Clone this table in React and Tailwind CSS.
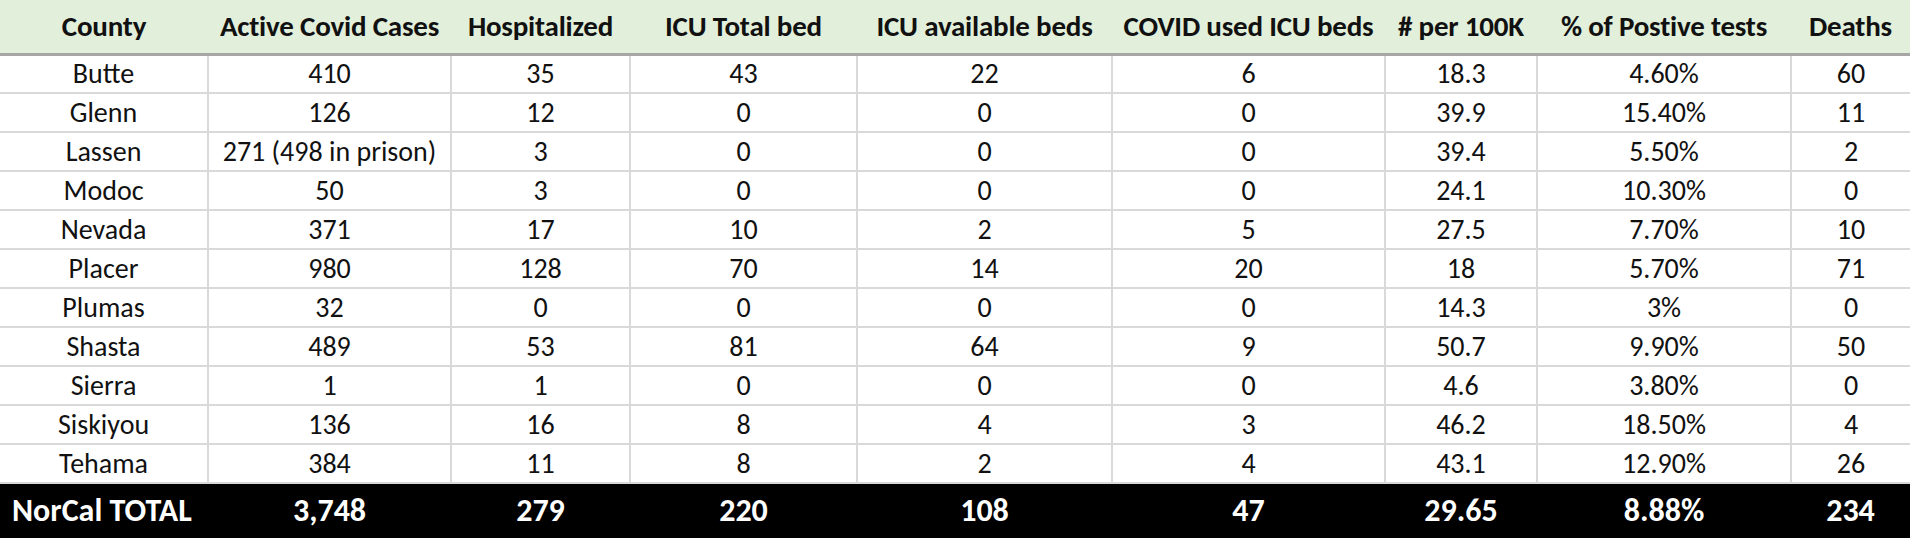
const columns = [
  { label: 'County', width: 'w-[208px]' },
  { label: 'Active Covid Cases', width: 'w-[243px]' },
  { label: 'Hospitalized', width: 'w-[179px]' },
  { label: 'ICU Total bed', width: 'w-[227px]' },
  { label: 'ICU available beds', width: 'w-[255px]' },
  { label: 'COVID used ICU beds', width: 'w-[273px]' },
  { label: '# per 100K', width: 'w-[152px]' },
  { label: '% of Postive tests', width: 'w-[254px]' },
  { label: 'Deaths', width: 'w-[119px]' },
]

const rows = [
  ['Butte', '410', '35', '43', '22', '6', '18.3', '4.60%', '60'],
  ['Glenn', '126', '12', '0', '0', '0', '39.9', '15.40%', '11'],
  ['Lassen', '271 (498 in prison)', '3', '0', '0', '0', '39.4', '5.50%', '2'],
  ['Modoc', '50', '3', '0', '0', '0', '24.1', '10.30%', '0'],
  ['Nevada', '371', '17', '10', '2', '5', '27.5', '7.70%', '10'],
  ['Placer', '980', '128', '70', '14', '20', '18', '5.70%', '71'],
  ['Plumas', '32', '0', '0', '0', '0', '14.3', '3%', '0'],
  ['Shasta', '489', '53', '81', '64', '9', '50.7', '9.90%', '50'],
  ['Sierra', '1', '1', '0', '0', '0', '4.6', '3.80%', '0'],
  ['Siskiyou', '136', '16', '8', '4', '3', '46.2', '18.50%', '4'],
  ['Tehama', '384', '11', '8', '2', '4', '43.1', '12.90%', '26'],
]

const total = ['NorCal TOTAL', '3,748', '279', '220', '108', '47', '29.65', '8.88%', '234']

export default function App() {
  return (
    <div className="w-[1910px] h-[538px] overflow-hidden bg-white font-['Carlito','Lato','Liberation_Sans',sans-serif] text-[28px] text-[#111]">
      <table className="w-[1910px] table-fixed border-collapse">
        <colgroup>
          {columns.map((c) => (
            <col key={c.label} className={c.width} />
          ))}
        </colgroup>
        <thead>
          <tr className="h-[54px] bg-[#e2efda]">
            {columns.map((c) => (
              <th key={c.label} className="border-b-[3px] border-[#a6a6a6] p-0 text-center text-[29px] font-bold leading-none whitespace-nowrap tracking-[-0.2px]">
                {c.label}
              </th>
            ))}
          </tr>
        </thead>
        <tbody>
          {rows.map((row) => (
            <tr key={row[0]} className="h-[39px]">
              {row.map((cell, i) => (
                <td
                  key={i}
                  className={`border-b-2 border-[#d9d9d9] p-0 text-center leading-none whitespace-nowrap ${i > 0 ? 'border-l-2' : ''}`}
                >
                  {cell}
                </td>
              ))}
            </tr>
          ))}
          <tr className="h-[55px] bg-black text-white">
            {total.map((cell, i) => (
              <td
                key={i}
                className={`border-t-2 border-[#a6a6a6] p-0 text-[32px] font-bold leading-none whitespace-nowrap ${i === 0 ? 'pl-[12px] text-left' : 'text-center'}`}
              >
                {cell}
              </td>
            ))}
          </tr>
        </tbody>
      </table>
    </div>
  )
}
